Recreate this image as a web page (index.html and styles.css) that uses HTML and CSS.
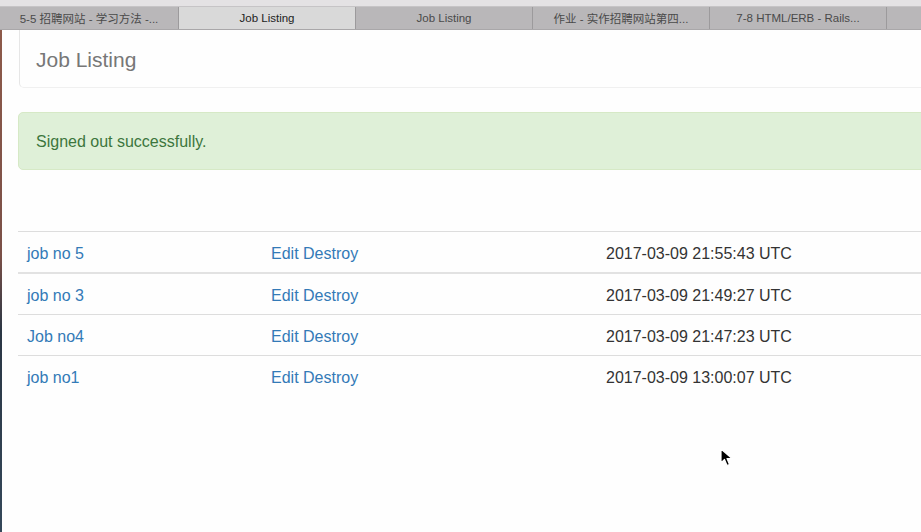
FILE: index.html
```html
<!DOCTYPE html>
<html>
<head>
<meta charset="utf-8">
<title>Job Listing</title>
<link rel="stylesheet" href="styles.css">
</head>
<body>
<div class="tabbar">
  <div class="tabs">
    <div class="tab t1">5-5 招聘网站 - 学习方法 -...</div>
    <div class="tab active">Job Listing</div>
    <div class="tab">Job Listing</div>
    <div class="tab">作业 - 实作招聘网站第四...</div>
    <div class="tab">7-8 HTML/ERB - Rails...</div>
    <div class="tab rest"></div>
  </div>
</div>
<div class="window">
  <div class="strip"></div>
  <div class="page">
    <div class="navbar"><span class="brand">Job Listing</span></div>
    <div class="alert">Signed out successfully.</div>
    <table class="jobs">
      <tbody>
        <tr class="first">
          <td class="c1"><a href="#">job no 5</a></td>
          <td class="c2"><a href="#">Edit</a> <a href="#">Destroy</a></td>
          <td class="c3">2017-03-09 21:55:43 UTC</td>
        </tr>
        <tr class="second">
          <td class="c1"><a href="#">job no 3</a></td>
          <td class="c2"><a href="#">Edit</a> <a href="#">Destroy</a></td>
          <td class="c3">2017-03-09 21:49:27 UTC</td>
        </tr>
        <tr>
          <td class="c1"><a href="#">Job no4</a></td>
          <td class="c2"><a href="#">Edit</a> <a href="#">Destroy</a></td>
          <td class="c3">2017-03-09 21:47:23 UTC</td>
        </tr>
        <tr class="last">
          <td class="c1"><a href="#">job no1</a></td>
          <td class="c2"><a href="#">Edit</a> <a href="#">Destroy</a></td>
          <td class="c3">2017-03-09 13:00:07 UTC</td>
        </tr>
      </tbody>
    </table>
    <svg class="cursor" width="14" height="20" viewBox="0 0 14 20">
      <path d="M1 1 L1 15 L4.5 11.5 L7 17.5 L9.5 16.5 L7 10.5 L12 10.5 Z" fill="#000" stroke="#fff" stroke-width="1.2" stroke-linejoin="round"/>
    </svg>
  </div>
</div>
</body>
</html>
```

FILE: styles.css
```css
html, body {
  margin: 0;
  padding: 0;
  background: #fefefe;
  overflow: hidden;
  width: 921px;
  height: 532px;
}
body {
  font-family: "Liberation Sans", Arial, "Noto Sans CJK SC", sans-serif;
  display: flex;
  flex-direction: column;
}
.tabbar {
  height: 30px;
  box-sizing: border-box;
  padding-top: 6px;
  background: #e4e2e4;
  flex: none;
}
.tabs {
  display: flex;
  height: 24px;
  box-sizing: border-box;
  border-top: 1px solid #c6c4c6;
  border-bottom: 1px solid #a9a7a9;
  background: #b9b7b9;
}
.tab {
  width: 177px;
  flex: none;
  box-sizing: border-box;
  border-right: 1px solid #9c9a9c;
  font-size: 11.5px;
  color: #4a4a4a;
  display: flex;
  align-items: center;
  justify-content: center;
  white-space: nowrap;
  font-family: "Liberation Sans", "Noto Sans CJK SC", sans-serif;
}
.tab.t1 { width: 179px; }
.tab.active {
  background: #d9d9d9;
  color: #222;
}
.tab.rest {
  flex: 1;
  border-right: none;
}
.window {
  flex: 1;
  display: flex;
  min-height: 0;
}
.strip {
  width: 2px;
  flex: none;
  background: linear-gradient(to bottom, #8d5a4a 0%, #7a5048 45%, #2a3644 60%, #35485a 100%);
}
.page {
  flex: 1;
  position: relative;
  min-width: 0;
}
.navbar {
  margin-left: 17px;
  width: 1000px;
  height: 58px;
  box-sizing: border-box;
  border-left: 1px solid #e6e6e6;
  border-bottom: 1px solid #f0f0f0;
  border-bottom-left-radius: 5px;
  display: flex;
  align-items: center;
  padding-left: 16px;
  padding-top: 3px;
}
.brand {
  font-size: 21px;
  color: #777;
}
.alert {
  margin: 24px 0 0 16px;
  width: 1000px;
  height: 58px;
  box-sizing: border-box;
  background: #dff0d8;
  border: 1px solid #d6e9c6;
  border-radius: 5px;
  color: #3c763d;
  font-size: 16px;
  display: flex;
  align-items: center;
  padding-left: 17px;
  padding-top: 2px;
}
.jobs {
  margin: 61px 0 0 16px;
  border-collapse: separate;
  border-spacing: 0;
  width: 1000px;
  font-size: 16px;
  color: #333;
}
.jobs td {
  border-top: 1px solid #dddddd;
  padding: 3px 0 0 9px;
  height: 41px;
  vertical-align: middle;
  box-sizing: border-box;
  white-space: nowrap;
}
.jobs tr.second td {
  border-top: 2px solid #e2e2e2;
  height: 42px;
}
.jobs tr.last td { height: 42px; }
.jobs td.c1 { width: 244px; }
.jobs td.c2 { width: 335px; }
.jobs a {
  color: #337ab7;
  text-decoration: none;
}
.cursor {
  position: absolute;
  left: 718px;
  top: 418px;
}
```
